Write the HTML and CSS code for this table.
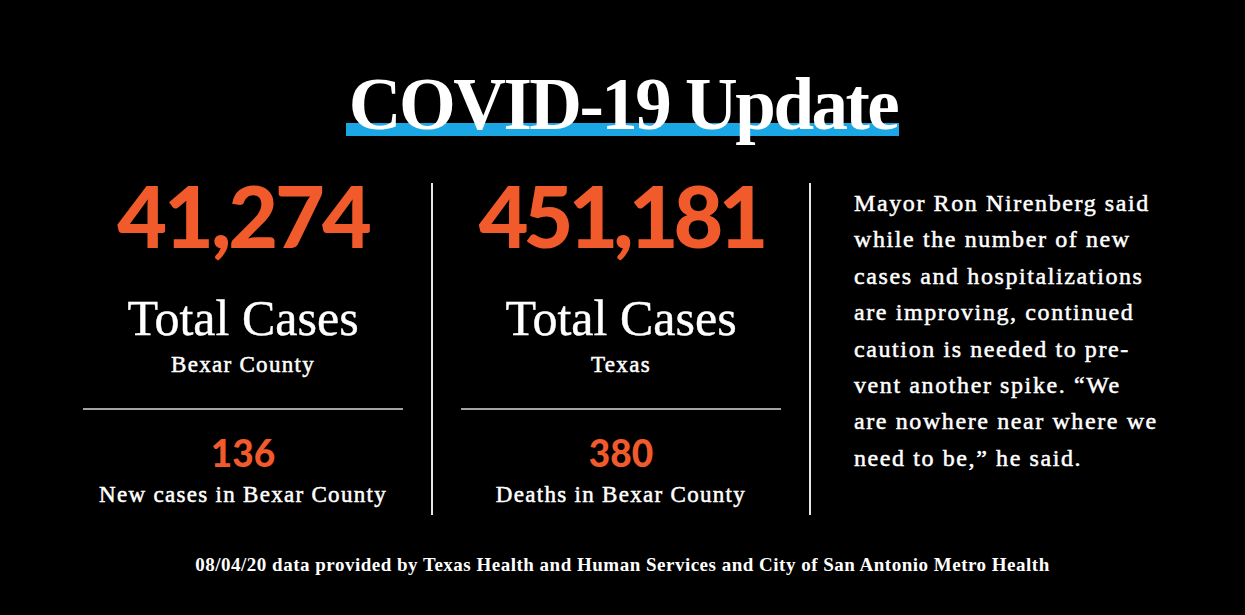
FILE: index.html
```html
<!DOCTYPE html>
<html lang="en">
<head>
<meta charset="utf-8">
<title>COVID-19 Update</title>
<link rel="stylesheet" href="styles.css">
</head>
<body>
<div class="page">
  <header class="head">
    <h1 class="title">COVID-19 Update</h1>
  </header>
  <section class="cols">
    <div class="stat">
      <div class="big">41,274</div>
      <div class="label">Total Cases</div>
      <div class="sub">Bexar County</div>
      <div class="rule"></div>
      <div class="small">136</div>
      <div class="small-label">New cases in Bexar County</div>
    </div>
    <div class="stat">
      <div class="big big-tight">451,181</div>
      <div class="label">Total Cases</div>
      <div class="sub">Texas</div>
      <div class="rule"></div>
      <div class="small">380</div>
      <div class="small-label">Deaths in Bexar County</div>
    </div>
    <div class="quote">
      <p>Mayor Ron Nirenberg said<br>while the number of new<br>cases and hospitalizations<br>are improving, continued<br>caution is needed to pre-<br>vent another spike. “We<br>are nowhere near where we<br>need to be,” he said.</p>
    </div>
  </section>
  <footer class="foot">08/04/20 data provided by Texas Health and Human Services and City of San Antonio Metro Health</footer>
</div>
</body>
</html>
```
FILE: styles.css
```css
html, body {
  margin: 0;
  padding: 0;
  background: #000;
}
.page {
  width: 1245px;
  height: 615px;
  background: #000;
  color: #fff;
  font-family: "Liberation Serif", "Times New Roman", serif;
  overflow: hidden;
}
.head {
  padding-top: 68px;
  text-align: center;
}
.title {
  display: inline-block;
  margin: 0;
  padding: 0 2px 0 3px;
  font-family: "Liberation Serif", "Times New Roman", serif;
  font-weight: bold;
  font-size: 73px;
  line-height: 74px;
  letter-spacing: -2.5px;
  color: #fff;
  background-image: linear-gradient(#1ba6e4, #1ba6e4);
  background-repeat: no-repeat;
  background-size: 100% 13px;
  background-position: 0 55px;
}
.cols {
  margin-top: 41px;
  margin-left: 55px;
  display: grid;
  grid-template-columns: 378px 378px 379px;
  height: 332px;
}
.stat {
  border-right: 2px solid #e6e6e6;
  text-align: center;
  display: flex;
  flex-direction: column;
  align-items: center;
}
.big {
  font-family: "Lato", "Open Sans", sans-serif;
  font-weight: 900;
  font-size: 86px;
  line-height: 64px;
  letter-spacing: -3px;
  color: #f15a2b;
}
.big-tight {
  letter-spacing: -5px;
}
.label {
  margin-top: 46px;
  font-size: 50px;
  line-height: 50px;
  letter-spacing: 0;
  -webkit-text-stroke: 0.4px #fff;
}
.sub {
  margin-top: 10px;
  font-size: 23px;
  line-height: 23px;
  letter-spacing: 1.3px;
  -webkit-text-stroke: 0.5px #fff;
}
.rule {
  margin-top: 32px;
  align-self: stretch;
  margin-left: 28px;
  margin-right: 28px;
  border-top: 2px solid #a3a3a3;
}
.small {
  margin-top: 24px;
  font-family: "Lato", "Open Sans", sans-serif;
  font-weight: 900;
  font-size: 37px;
  line-height: 37px;
  color: #f15a2b;
}
.small-label {
  margin-top: 12px;
  font-size: 23px;
  line-height: 23px;
  letter-spacing: 1.3px;
  -webkit-text-stroke: 0.5px #fff;
}
.quote {
  padding-left: 43px;
  padding-top: 2px;
}
.quote p {
  margin: 0;
  font-size: 24px;
  line-height: 36.4px;
  letter-spacing: 1.6px;
  white-space: nowrap;
  -webkit-text-stroke: 0.5px #fff;
}
.foot {
  margin-top: 40px;
  text-align: center;
  font-size: 19px;
  font-weight: bold;
  line-height: 19px;
  letter-spacing: 0.5px;
}
```
